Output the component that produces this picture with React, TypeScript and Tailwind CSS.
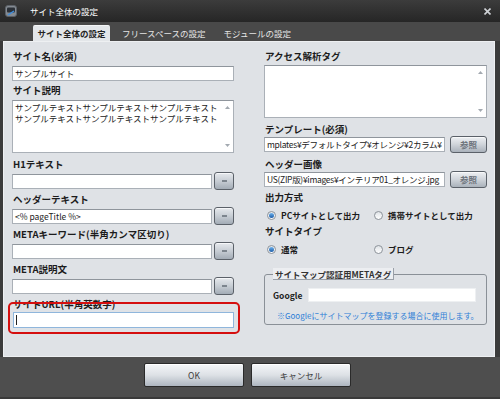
import React from "react";

const Label = ({ children, className = "" }: { children: React.ReactNode; className?: string }) => (
  <div className={`h-[12px] leading-[12px] text-[9.5px] font-bold text-[#1c1c1c] pl-[1px] whitespace-nowrap ${className}`}>
    {children}
  </div>
);

const TextBox = ({ value = "", className = "" }: { value?: string; className?: string }) => (
  <div
    className={`h-[15px] min-w-0 bg-white border border-[#aab0b7] border-t-[#8f959c] overflow-hidden whitespace-nowrap text-[8.5px] leading-[13px] pl-[2px] text-[#222] ${className}`}
  >
    {value}
  </div>
);

const TextArea = ({ lines, className = "" }: { lines: string[]; className?: string }) => (
  <div className={`flex bg-white border border-[#aab0b7] border-t-[#8f959c] ${className}`}>
    <div className="flex-1 pl-[2px] pt-[1px] text-[8.5px] leading-[10.5px] text-[#222] whitespace-nowrap overflow-hidden">
      {lines.map((l, i) => (
        <div key={i}>{l}</div>
      ))}
    </div>
    <div className="w-[11px] flex flex-col justify-between items-center py-[5px]">
      <svg width="5" height="3" viewBox="0 0 5 3">
        <path d="M0 3 L2.5 0 L5 3 Z" fill="#a3a9b0" />
      </svg>
      <svg width="5" height="3" viewBox="0 0 5 3">
        <path d="M0 0 L2.5 3 L5 0 Z" fill="#a3a9b0" />
      </svg>
    </div>
  </div>
);

const DotButton = () => (
  <div className="w-[20px] h-[18px] ml-[2px] shrink-0 rounded-[3px] border border-[#5b6169] bg-gradient-to-b from-[#e6e9ed] via-[#c7cdd4] to-[#a3acb6] flex items-center justify-center shadow-[inset_0_1px_0_#f6f7f9]">
    <span className="w-[5px] h-[2px] bg-[#7d858e]" />
  </div>
);

const BrowseButton = () => (
  <div className="w-[37px] h-[17px] ml-[5px] shrink-0 rounded-[3px] border border-[#5b6169] bg-gradient-to-b from-[#eef0f3] via-[#cfd4da] to-[#aab2bb] flex items-center justify-center text-[8.5px] font-bold text-[#6b7179] shadow-[inset_0_1px_0_#f8f9fa]">
    参照
  </div>
);

const Radio = ({ checked, label, className = "" }: { checked?: boolean; label: string; className?: string }) => (
  <div className={`flex items-center h-[12px] ${className}`}>
    <span className="w-[9px] h-[9px] rounded-full border border-[#8d939a] bg-gradient-to-b from-[#dfe3e7] to-[#ffffff] flex items-center justify-center">
      {checked && <span className="w-[5px] h-[5px] rounded-full bg-gradient-to-b from-[#6fb3ee] to-[#1b5ca6]" />}
    </span>
    <span className="ml-[5px] text-[8.5px] font-bold text-[#1c1c1c] whitespace-nowrap">{label}</span>
  </div>
);

const FooterButton = ({ children }: { children: React.ReactNode }) => (
  <div className="w-[100px] h-[24px] rounded-[2px] border border-[#2a2a2a] bg-gradient-to-b from-[#f5f6f8] via-[#dde1e6] to-[#aeb6c0] flex items-center justify-center text-[8.5px] text-[#3a3a3a] shadow-[inset_0_1px_0_#ffffff]">
    {children}
  </div>
);

export default function App() {
  return (
    <div className="w-[500px] h-[399px] bg-[#3b3b3b] flex flex-col font-['Noto_Sans_CJK_JP','Liberation_Sans',sans-serif] overflow-hidden">
      {/* title bar */}
      <div className="h-[22px] flex items-center bg-gradient-to-b from-[#3c3c3c] to-[#262626] pl-[5px] pr-[9px]">
        <svg width="12" height="12" viewBox="0 0 12 12">
          <rect x="0.5" y="0.5" width="11" height="11" rx="2.5" fill="#858b92" stroke="#5c6168" />
          <rect x="2" y="2.5" width="8" height="5" rx="1" fill="#2b3037" />
          <path d="M3 10 L9 6" stroke="#3d8ee0" strokeWidth="1.5" />
        </svg>
        <span className="ml-[13px] text-[8.5px] text-white">サイト全体の設定</span>
        <svg className="ml-auto" width="7" height="7" viewBox="0 0 7 7">
          <path d="M0.5 0.5 L6.5 6.5 M6.5 0.5 L0.5 6.5" stroke="#cfd2d6" strokeWidth="1.6" />
        </svg>
      </div>

      {/* tabs */}
      <div className="h-[19px] flex items-end bg-[#494949] text-[8.5px]">
        <div className="ml-[33px] w-[77px] h-[16px] rounded-t-[2px] bg-[#e3e6e9] border-t border-[#f4f5f6] flex items-center justify-center font-bold text-[#222]">
          サイト全体の設定
        </div>
        <div className="ml-[12px] h-[16px] flex items-center text-[#e4e4e4]">フリースペースの設定</div>
        <div className="ml-[18px] h-[16px] flex items-center text-[#e4e4e4]">モジュールの設定</div>
      </div>

      {/* panel */}
      <div className="h-[316px] ml-[3px] mr-[5px] bg-[#dfe2e6] border border-[#eef0f2] flex pl-[8px] pr-[7px] pt-[8px]">
        {/* left column */}
        <div className="w-[222px] flex flex-col">
          <Label>サイト名(必須)</Label>
          <TextBox className="mt-[4px] w-full" value="サンプルサイト" />
          <Label className="mt-[3px]">サイト説明</Label>
          <TextArea
            className="mt-[4px] h-[53px]"
            lines={["サンプルテキストサンプルテキストサンプルテキスト", "サンプルテキストサンプルテキストサンプルテキスト"]}
          />
          <Label className="mt-[5px]">H1テキスト</Label>
          <div className="mt-[2px] flex items-center">
            <TextBox className="flex-1" />
            <DotButton />
          </div>
          <Label className="mt-[3px]">ヘッダーテキスト</Label>
          <div className="mt-[2px] flex items-center">
            <TextBox className="flex-1" value="<% pageTitle %>" />
            <DotButton />
          </div>
          <Label className="mt-[3px]">METAキーワード(半角カンマ区切り)</Label>
          <div className="mt-[2px] flex items-center">
            <TextBox className="flex-1" />
            <DotButton />
          </div>
          <Label className="mt-[3px]">META説明文</Label>
          <div className="mt-[2px] flex items-center">
            <TextBox className="flex-1" />
            <DotButton />
          </div>
          <div className="relative mt-[3px]">
            <Label>サイトURL(半角英数字)</Label>
            <div className="mt-[2px] ml-[1px] h-[16px] bg-white border border-[#8fb6dc] flex items-center pl-[2px]">
              <span className="w-[1px] h-[10px] bg-[#222]" />
            </div>
            <div className="absolute left-[-4px] right-[-6px] top-[4px] h-[32px] rounded-[5px] border-2 border-[#d50f0f]" />
          </div>
        </div>

        {/* right column */}
        <div className="w-[223px] ml-[30px] flex flex-col">
          <Label>アクセス解析タグ</Label>
          <TextArea className="mt-[3px] h-[53px]" lines={[]} />
          <Label className="mt-[5px]">テンプレート(必須)</Label>
          <div className="mt-[1px] flex items-center">
            <TextBox className="flex-1 tracking-[-0.3px]" value="mplates¥デフォルトタイプ¥オレンジ¥2カラム¥" />
            <BrowseButton />
          </div>
          <Label className="mt-[5px]">ヘッダー画像</Label>
          <div className="mt-[1px] flex items-center">
            <TextBox className="flex-1 tracking-[-0.3px]" value="US(ZIP版)¥images¥インテリア01_オレンジ.jpg" />
            <BrowseButton />
          </div>
          <Label className="mt-[3px]">出力方式</Label>
          <div className="mt-[6px] flex pl-[3px]">
            <Radio checked label="PCサイトとして出力" className="w-[107px]" />
            <Radio label="携帯サイトとして出力" />
          </div>
          <Label className="mt-[4px]">サイトタイプ</Label>
          <div className="mt-[6px] flex pl-[3px]">
            <Radio checked label="通常" className="w-[107px]" />
            <Radio label="ブログ" />
          </div>
          <fieldset className="mt-[13px] min-w-0 w-full border border-[#8a9097] rounded-[3px] pl-[8px] pr-[10px] pb-[2px]">
            <legend className="h-[12px] px-[2px] leading-[12px] text-[8.5px] font-bold text-[#333] bg-[#eceef1] border-b border-r border-[#9aa0a8] whitespace-nowrap">
              サイトマップ認証用METAタグ
            </legend>
            <div className="mt-[8px] flex items-center">
              <span className="w-[35px] shrink-0 text-[8.5px] font-bold text-[#222]">Google</span>
              <div className="flex-1 min-w-0 h-[14px] bg-white border border-[#eef0f2]" />
            </div>
            <div className="mt-[8px] pl-[4px] h-[12px] leading-[12px] text-[8px] text-[#2f7fd6] whitespace-nowrap">
              ※Googleにサイトマップを登録する場合に使用します。
            </div>
          </fieldset>
        </div>
      </div>

      {/* footer */}
      <div className="flex-1 bg-[#4e4e4e] border-b-2 border-[#3a3a3a] flex justify-center gap-[7px] pt-[6px] pr-[5px]">
        <FooterButton>OK</FooterButton>
        <FooterButton>キャンセル</FooterButton>
      </div>
    </div>
  );
}
